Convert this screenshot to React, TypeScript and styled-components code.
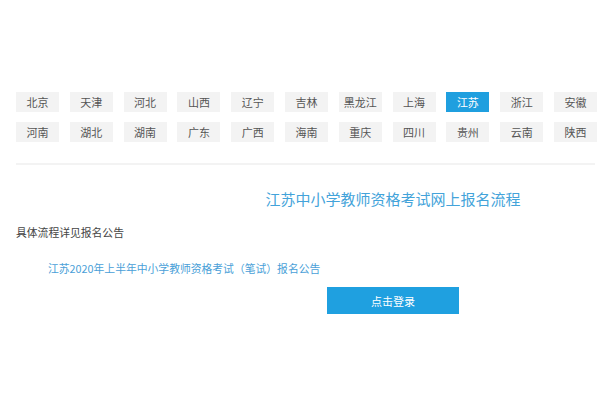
import React from "react";
import styled, { createGlobalStyle } from "styled-components";

const Global = createGlobalStyle`
  html, body { margin: 0; padding: 0; background: #fff; }
  body { font-family: "Noto Sans CJK SC", "Liberation Sans", sans-serif; }
`;

const Page = styled.div`
  width: 600px;
  height: 400px;
  box-sizing: border-box;
  padding: 92px 3px 0 16px;
  display: flex;
  flex-direction: column;
`;

const Grid = styled.div`
  display: flex;
  flex-direction: column;
  gap: 10px;
`;

const Row = styled.div`
  display: flex;
  justify-content: space-between;
  width: 581px;
`;

const Tab = styled.div<{ $active?: boolean }>`
  width: 43px;
  height: 20px;
  display: flex;
  align-items: center;
  justify-content: center;
  font-size: 11px;
  color: ${(p) => (p.$active ? "#fff" : "#555")};
  background: ${(p) => (p.$active ? "#1f9fdf" : "#f3f3f3")};
`;

const Divider = styled.div`
  width: 579px;
  height: 2px;
  background: #f3f3f3;
  margin-top: 21px;
`;

const Center = styled.div`
  margin-left: 170px;
  width: 414px;
  display: flex;
  flex-direction: column;
  align-items: center;
`;

const Title = styled.div`
  margin-top: 24px;
  font-size: 15px;
  line-height: 20px;
  color: #43a3da;
`;

const Desc = styled.div`
  margin-top: 15px;
  font-size: 10.8px;
  line-height: 16px;
  color: #444;
`;

const Link = styled.a`
  display: block;
  margin: 20px 0 0 32px;
  font-size: 10.8px;
  line-height: 16px;
  color: #4a9fd8;
  text-decoration: none;
`;

const Button = styled.div`
  margin-top: 11px;
  margin-left: 311px;
  width: 132px;
  height: 27px;
  background: #1fa0e0;
  color: #fff;
  font-size: 11px;
  display: flex;
  align-items: center;
  justify-content: center;
`;

const row1 = ["北京", "天津", "河北", "山西", "辽宁", "吉林", "黑龙江", "上海", "江苏", "浙江", "安徽"];
const row2 = ["河南", "湖北", "湖南", "广东", "广西", "海南", "重庆", "四川", "贵州", "云南", "陕西"];

export default function App() {
  return (
    <>
      <Global />
      <Page>
        <Grid>
          <Row>
            {row1.map((n) => (
              <Tab key={n} $active={n === "江苏"}>{n}</Tab>
            ))}
          </Row>
          <Row>
            {row2.map((n) => (
              <Tab key={n}>{n}</Tab>
            ))}
          </Row>
        </Grid>
        <Divider />
        <Center>
          <Title>江苏中小学教师资格考试网上报名流程</Title>
        </Center>
        <Desc>具体流程详见报名公告</Desc>
        <Link href="#">江苏2020年上半年中小学教师资格考试（笔试）报名公告</Link>
        <Button>点击登录</Button>
      </Page>
    </>
  );
}
